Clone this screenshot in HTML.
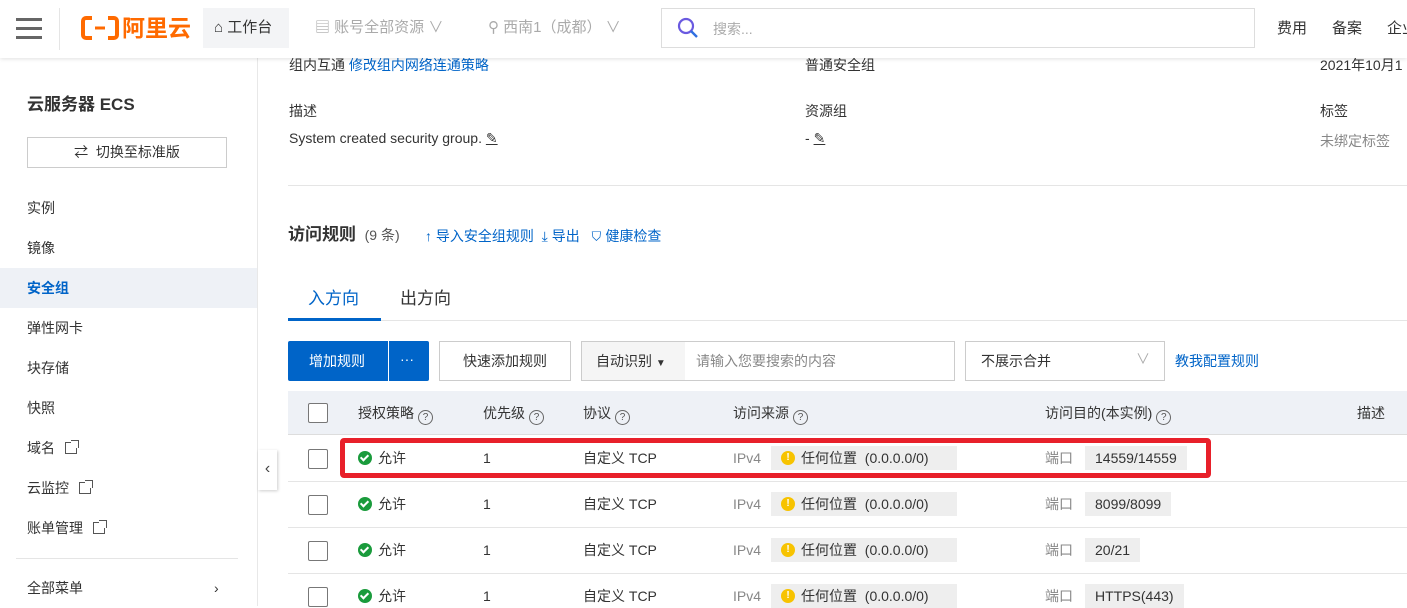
<!DOCTYPE html>
<html><head><meta charset="utf-8">
<style>
*{box-sizing:border-box;margin:0;padding:0}
body{width:1407px;height:606px;overflow:hidden;background:#fff;font-family:"Liberation Sans","Noto Sans CJK SC",sans-serif;font-size:14px;color:#333;position:relative}
.a{position:absolute;white-space:nowrap;line-height:20px}
.blue{color:#0064c8}
.gray{color:#888}
.q{display:inline-block;width:15px;height:15px;border:1.2px solid #666;border-radius:50%;font-size:10px;line-height:13px;text-align:center;color:#555;vertical-align:-2px;margin-left:4px}
.cb{position:absolute;width:20px;height:20px;border:1px solid #777;border-radius:2px;background:#fff}
.tag{position:absolute;background:#eee;height:24px;line-height:24px;padding:0 10px;display:flex;align-items:center;white-space:nowrap}
.ok{display:inline-block;width:14px;height:14px;border-radius:50%;background:#1a9b3c;vertical-align:-2px;margin-right:6px;position:relative}
.ok:after{content:"";position:absolute;left:4px;top:2px;width:3px;height:6px;border:solid #fff;border-width:0 2px 2px 0;transform:rotate(45deg)}
.warn{display:inline-block;width:14px;height:14px;border-radius:50%;background:#f7c300;margin-right:6px;color:#fff;font-size:10px;text-align:center;line-height:14px;font-weight:bold;flex:none}
.ext{display:inline-block;width:12px;height:12px;border:1.3px solid #555;margin-left:10px;vertical-align:-1px;position:relative}
.ext:after{content:"";position:absolute;right:-3px;top:-3px;width:7px;height:7px;background:#fff;border-top:1.3px solid #555;border-right:1.3px solid #555}
</style></head><body>
<div class="a" style="left:0;top:0;width:1407px;height:58px;background:#fff;box-shadow:0 1px 4px rgba(0,0,0,.12);z-index:5">
  <div class="a" style="left:16px;top:18px;width:26px;height:3px;background:#666;box-shadow:0 9px 0 #666,0 18px 0 #666"></div>
  <div class="a" style="left:59px;top:8px;width:1px;height:42px;background:#e5e5e5"></div>
  <svg class="a" style="left:81px;top:16px" width="38" height="24" viewBox="0 0 38 24"><path d="M11 2H5a3 3 0 0 0-3 3v14a3 3 0 0 0 3 3h6M27 2h6a3 3 0 0 1 3 3v14a3 3 0 0 1-3 3h-6" fill="none" stroke="#ff6a00" stroke-width="4"/><rect x="14" y="10.5" width="10" height="3" fill="#ff6a00"/></svg>
  <div class="a" style="left:122px;top:14px;font-size:23px;line-height:28px;font-weight:bold;color:#ff6a00">阿里云</div>
  <div class="a" style="left:203px;top:8px;width:86px;height:40px;background:#f3f4f6"></div>
  <div class="a" style="left:214px;top:18px;font-size:15px;color:#333">⌂ 工作台</div>
  <div class="a" style="left:315px;top:18px;font-size:15px;color:#aaa">▤ 账号全部资源 ∨</div>
  <div class="a" style="left:488px;top:18px;font-size:15px;color:#aaa">⚲ 西南1（成都） ∨</div>
  <div class="a" style="left:661px;top:8px;width:594px;height:40px;border:1px solid #ddd"></div>
  <svg class="a" style="left:677px;top:17px" width="22" height="22" viewBox="0 0 22 22"><circle cx="9" cy="9" r="7" fill="none" stroke="#6a5ae0" stroke-width="2.2"/><line x1="14" y1="14" x2="20" y2="20" stroke="#2f6fe0" stroke-width="2.4"/></svg>
  <div class="a" style="left:713px;top:19px;color:#aaa">搜索...</div>
  <div class="a" style="left:1277px;top:19px;font-size:15px">费用</div>
  <div class="a" style="left:1332px;top:19px;font-size:15px">备案</div>
  <div class="a" style="left:1387px;top:19px;font-size:15px">企业</div>
</div>
<div class="a" style="left:257px;top:58px;width:1px;height:548px;background:#e8e8e8"></div>
<div class="a" style="left:27px;top:95px;font-size:17px;font-weight:bold;color:#333">云服务器 ECS</div>
<div class="a" style="left:27px;top:137px;width:200px;height:31px;border:1px solid #ccc;text-align:center;line-height:29px">⇄ &nbsp;切换至标准版</div>
<div class="a" style="left:27px;top:198px">实例</div>
<div class="a" style="left:27px;top:238px">镜像</div>
<div class="a" style="left:0;top:268px;width:257px;height:40px;background:#eef1f6"></div>
<div class="a blue" style="left:27px;top:278px;font-weight:bold">安全组</div>
<div class="a" style="left:27px;top:318px">弹性网卡</div>
<div class="a" style="left:27px;top:358px">块存储</div>
<div class="a" style="left:27px;top:398px">快照</div>
<div class="a" style="left:27px;top:438px">域名<span class="ext"></span></div>
<div class="a" style="left:27px;top:478px">云监控<span class="ext"></span></div>
<div class="a" style="left:27px;top:518px">账单管理<span class="ext"></span></div>
<div class="a" style="left:16px;top:558px;width:222px;height:1px;background:#e5e5e5"></div>
<div class="a" style="left:27px;top:578px">全部菜单</div>
<div class="a" style="left:214px;top:578px">›</div>
<div class="a" style="left:258px;top:450px;width:19px;height:40px;background:#fff;box-shadow:1px 1px 3px rgba(0,0,0,.2);text-align:center;line-height:38px;font-size:16px;color:#444">‹</div>
<div class="a" style="left:289px;top:55px">组内互通 <span class="blue">修改组内网络连通策略</span></div>
<div class="a" style="left:805px;top:55px">普通安全组</div>
<div class="a" style="left:1320px;top:55px">2021年10月1</div>
<div class="a" style="left:289px;top:101px">描述</div>
<div class="a" style="left:805px;top:101px">资源组</div>
<div class="a" style="left:1320px;top:101px">标签</div>
<div class="a" style="left:289px;top:128px">System created security group. <u>✎</u></div>
<div class="a" style="left:805px;top:128px">- <u>✎</u></div>
<div class="a gray" style="left:1320px;top:131px">未绑定标签</div>
<div class="a" style="left:288px;top:185px;width:1119px;height:1px;background:#e5e5e5"></div>
<div class="a" style="left:288px;top:225px;font-size:17px;font-weight:bold">访问规则 <span style="font-size:14px;font-weight:normal;color:#555">&nbsp;(9 条)</span></div>
<div class="a blue" style="left:425px;top:226px">↑ 导入安全组规则 &nbsp;⤓ 导出 &nbsp;&nbsp;⛉ 健康检查</div>
<div class="a" style="left:308px;top:289px;font-size:17px;color:#0064c8">入方向</div>
<div class="a" style="left:400px;top:289px;font-size:17px">出方向</div>
<div class="a" style="left:288px;top:320px;width:1119px;height:1px;background:#e5e5e5"></div>
<div class="a" style="left:288px;top:318px;width:93px;height:3px;background:#0064c8"></div>
<div class="a" style="left:288px;top:341px;width:141px;height:40px;background:#0064c8;border-radius:2px"></div>
<div class="a" style="left:388px;top:341px;width:1px;height:40px;background:#fff"></div>
<div class="a" style="left:309px;top:351px;color:#fff">增加规则</div>
<div class="a" style="left:400px;top:349px;color:#fff">···</div>
<div class="a" style="left:439px;top:341px;width:132px;height:40px;border:1px solid #ccc;text-align:center;line-height:38px">快速添加规则</div>
<div class="a" style="left:581px;top:341px;width:374px;height:40px;border:1px solid #ccc"></div>
<div class="a" style="left:582px;top:342px;width:103px;height:38px;background:#f5f5f5"></div>
<div class="a" style="left:596px;top:351px">自动识别 <span style="font-size:10px">▼</span></div>
<div class="a gray" style="left:696px;top:351px">请输入您要搜索的内容</div>
<div class="a" style="left:965px;top:341px;width:200px;height:40px;border:1px solid #ccc"></div>
<div class="a" style="left:981px;top:351px">不展示合并</div>
<div class="a" style="left:1136px;top:349px;color:#aaa">∨</div>
<div class="a blue" style="left:1175px;top:351px">教我配置规则</div>
<div class="a" style="left:288px;top:391px;width:1119px;height:44px;background:#eef1f6;border-bottom:1px solid #ddd"></div>
<div class="cb" style="left:308px;top:403px"></div>
<div class="a" style="left:358px;top:403px">授权策略<span class="q">?</span></div>
<div class="a" style="left:483px;top:403px">优先级<span class="q">?</span></div>
<div class="a" style="left:583px;top:403px">协议<span class="q">?</span></div>
<div class="a" style="left:733px;top:403px">访问来源<span class="q">?</span></div>
<div class="a" style="left:1045px;top:403px">访问目的(本实例)<span class="q">?</span></div>
<div class="a" style="left:1357px;top:403px">描述</div>
<div class="a" style="left:288px;top:481px;width:1119px;height:1px;background:#e5e5e5"></div>
<div class="a" style="left:288px;top:527px;width:1119px;height:1px;background:#e5e5e5"></div>
<div class="a" style="left:288px;top:573px;width:1119px;height:1px;background:#e5e5e5"></div>

<div class="cb" style="left:308px;top:449px"></div>
<div class="a" style="left:358px;top:448px"><span class="ok"></span>允许</div>
<div class="a" style="left:483px;top:448px">1</div>
<div class="a" style="left:583px;top:448px">自定义 TCP</div>
<div class="a gray" style="left:733px;top:448px">IPv4</div>
<div class="tag" style="left:771px;top:446px;width:186px"><span class="warn">!</span>任何位置&nbsp;&nbsp;(0.0.0.0/0)</div>
<div class="a gray" style="left:1045px;top:448px">端口</div>
<div class="tag" style="left:1085px;top:446px">14559/14559</div>

<div class="cb" style="left:308px;top:495px"></div>
<div class="a" style="left:358px;top:494px"><span class="ok"></span>允许</div>
<div class="a" style="left:483px;top:494px">1</div>
<div class="a" style="left:583px;top:494px">自定义 TCP</div>
<div class="a gray" style="left:733px;top:494px">IPv4</div>
<div class="tag" style="left:771px;top:492px;width:186px"><span class="warn">!</span>任何位置&nbsp;&nbsp;(0.0.0.0/0)</div>
<div class="a gray" style="left:1045px;top:494px">端口</div>
<div class="tag" style="left:1085px;top:492px">8099/8099</div>

<div class="cb" style="left:308px;top:541px"></div>
<div class="a" style="left:358px;top:540px"><span class="ok"></span>允许</div>
<div class="a" style="left:483px;top:540px">1</div>
<div class="a" style="left:583px;top:540px">自定义 TCP</div>
<div class="a gray" style="left:733px;top:540px">IPv4</div>
<div class="tag" style="left:771px;top:538px;width:186px"><span class="warn">!</span>任何位置&nbsp;&nbsp;(0.0.0.0/0)</div>
<div class="a gray" style="left:1045px;top:540px">端口</div>
<div class="tag" style="left:1085px;top:538px">20/21</div>

<div class="cb" style="left:308px;top:587px"></div>
<div class="a" style="left:358px;top:586px"><span class="ok"></span>允许</div>
<div class="a" style="left:483px;top:586px">1</div>
<div class="a" style="left:583px;top:586px">自定义 TCP</div>
<div class="a gray" style="left:733px;top:586px">IPv4</div>
<div class="tag" style="left:771px;top:584px;width:186px"><span class="warn">!</span>任何位置&nbsp;&nbsp;(0.0.0.0/0)</div>
<div class="a gray" style="left:1045px;top:586px">端口</div>
<div class="tag" style="left:1085px;top:584px">HTTPS(443)</div>

<div class="a" style="left:340px;top:438px;width:871px;height:40px;border:5px solid #e8202a;border-radius:4px"></div>
</body></html>
